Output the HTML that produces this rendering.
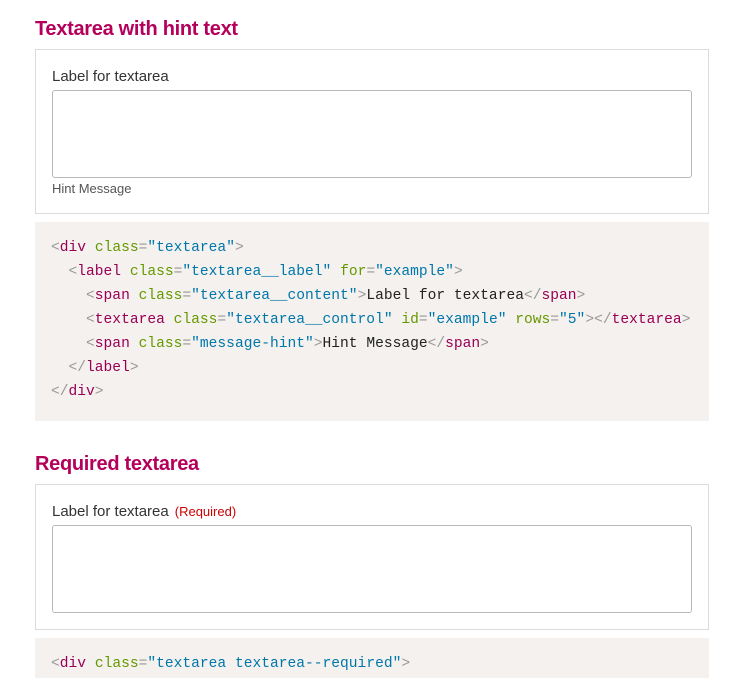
<!DOCTYPE html>
<html><head><meta charset="utf-8"><style>
body{margin:0;background:#fff;font-family:"Liberation Sans",sans-serif;width:729px;height:670px;overflow:hidden;position:relative}
h2{position:absolute;left:35px;margin:0;font-size:20px;font-weight:bold;color:#b5005b;letter-spacing:-0.3px}
.box{position:absolute;left:35px;width:672px;border:1px solid #dcdcdc;background:#fff}
.lbl{position:absolute;left:16px;font-size:15px;color:#333}
.ta{position:absolute;left:16px;width:638px;height:86px;border:1px solid #b8b8b8;border-radius:3px}
.hint{position:absolute;left:16px;font-size:13px;color:#555}
.req{color:#c00;font-size:13px;margin-left:6px}
.code{position:absolute;left:35px;width:674px;background:#f4f1ee;font-family:"Liberation Mono",monospace;font-size:14.6px;line-height:24px;color:#222;white-space:pre;padding-top:14px;box-sizing:border-box;padding-left:16px}
.t{color:#990055}.a{color:#669900}.v{color:#0077aa}.p{color:#999}
</style></head><body>
<h2 style="top:18px">Textarea with hint text</h2>
<div class="box" style="top:49px;height:163px">
<div class="lbl" style="top:18px">Label for textarea</div>
<div class="ta" style="top:40px"></div>
<div class="hint" style="top:131px">Hint Message</div>
</div>
<div class="code" style="top:222px;height:199px"><span class="p">&lt;</span><span class="t">div</span> <span class="a">class</span><span class="p">=</span><span class="v">"textarea"</span><span class="p">&gt;</span>
  <span class="p">&lt;</span><span class="t">label</span> <span class="a">class</span><span class="p">=</span><span class="v">"textarea__label"</span> <span class="a">for</span><span class="p">=</span><span class="v">"example"</span><span class="p">&gt;</span>
    <span class="p">&lt;</span><span class="t">span</span> <span class="a">class</span><span class="p">=</span><span class="v">"textarea__content"</span><span class="p">&gt;</span>Label for textarea<span class="p">&lt;/</span><span class="t">span</span><span class="p">&gt;</span>
    <span class="p">&lt;</span><span class="t">textarea</span> <span class="a">class</span><span class="p">=</span><span class="v">"textarea__control"</span> <span class="a">id</span><span class="p">=</span><span class="v">"example"</span> <span class="a">rows</span><span class="p">=</span><span class="v">"5"</span><span class="p">&gt;&lt;/</span><span class="t">textarea</span><span class="p">&gt;</span>
    <span class="p">&lt;</span><span class="t">span</span> <span class="a">class</span><span class="p">=</span><span class="v">"message-hint"</span><span class="p">&gt;</span>Hint Message<span class="p">&lt;/</span><span class="t">span</span><span class="p">&gt;</span>
  <span class="p">&lt;/</span><span class="t">label</span><span class="p">&gt;</span>
<span class="p">&lt;/</span><span class="t">div</span><span class="p">&gt;</span></div>
<h2 style="top:453px">Required textarea</h2>
<div class="box" style="top:484px;height:144px">
<div class="lbl" style="top:18px">Label for textarea<span class="req">(Required)</span></div>
<div class="ta" style="top:40px"></div>
</div>
<div class="code" style="top:638px;height:40px"><span class="p">&lt;</span><span class="t">div</span> <span class="a">class</span><span class="p">=</span><span class="v">"textarea textarea--required"</span><span class="p">&gt;</span></div>
</body></html>
